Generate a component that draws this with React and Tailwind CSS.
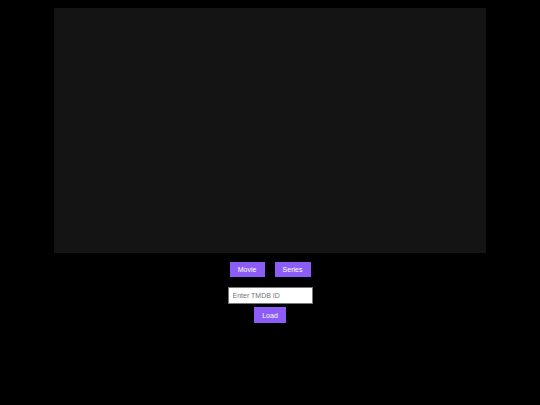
import React, {useState} from 'react';

export default function App() {
    const [mediaType, setMediaType] = useState('movie');
    const [tmdbId, setTmdbId] = useState('');

    return (
        <div className="min-h-[405px] w-full bg-black flex flex-col items-center pt-[8px]" style={{fontFamily: '"Liberation Sans", Arial, sans-serif'}}>
            {/* player area */}
            <div className="w-[432px] h-[245px] bg-[#141414]"></div>

            <div className="flex gap-[10px] mt-[9px]">
                <button onClick={() => setMediaType('movie')}
                        className="w-[35px] h-[15px] bg-[#8b5cf6] text-white text-[7px] leading-none flex items-center justify-center">
                    Movie
                </button>
                <button onClick={() => setMediaType('tv')}
                        className="w-[36px] h-[15px] bg-[#8b5cf6] text-white text-[7px] leading-none flex items-center justify-center">
                    Series
                </button>
            </div>

            <input type="text" value={tmdbId} onChange={e => setTmdbId(e.target.value)}
                   placeholder="Enter TMDB ID"
                   className="mt-[10px] w-[85px] h-[17px] bg-white border border-[#767676] px-[4px] text-[7px] text-black placeholder:text-[#757575] outline-none"/>

            <button className="mt-[3px] w-[32px] h-[16px] bg-[#8b5cf6] text-white text-[7px] leading-none flex items-center justify-center">
                Load
            </button>
        </div>
    );
}
